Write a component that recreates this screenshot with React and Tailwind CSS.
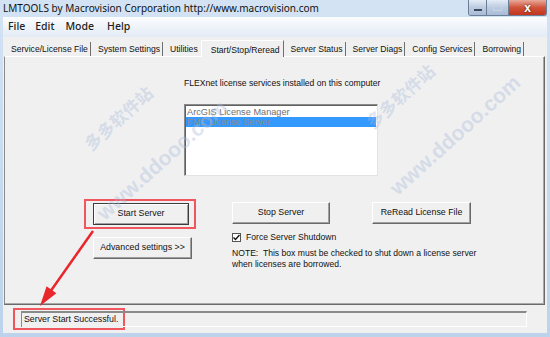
import React from "react"

const tabs = [
  "Service/License File",
  "System Settings",
  "Utilities",
  "Start/Stop/Reread",
  "Server Status",
  "Server Diags",
  "Config Services",
  "Borrowing",
]

function Btn({ children, className = "", isDefault = false }) {
  return (
    <div
      className={`h-[22px] flex items-center justify-center bg-[#f0f0f0] text-[8.8px] text-[#111] ${
        isDefault
          ? "border border-[#3c3c3c] shadow-[inset_1px_1px_0_#fff,inset_-1px_-1px_0_#a0a0a0]"
          : "border border-t-[#fff] border-l-[#fff] border-r-[#696969] border-b-[#696969] shadow-[inset_-1px_-1px_0_#a0a0a0]"
      } ${className}`}
    >
      {children}
    </div>
  )
}

function Watermark({ text, x, y, size, className = "" }) {
  return (
    <span
      className={`absolute -translate-x-1/2 -translate-y-1/2 rotate-[-42deg] whitespace-nowrap font-semibold text-[#a9bcdc]/40 pointer-events-none ${className}`}
      style={{ left: x, top: y, fontSize: size }}
    >
      {text}
    </span>
  )
}

export default function App() {
  return (
    <div className="w-[550px] h-[337px] relative overflow-hidden flex flex-col bg-[linear-gradient(to_bottom,#d3e3f4,#bcd3eb)] font-['Liberation_Sans',Arial,sans-serif] text-black">
      {/* title bar */}
      <div className="h-[17px] flex items-start justify-between">
        <span className="pl-[3px] pt-[2px] text-[10px] leading-[13px] text-[#111] font-['Noto_Sans','Open_Sans',sans-serif]">
          LMTOOLS by Macrovision Corporation http://www.macrovision.com
        </span>
        <div className="flex mr-[3px] rounded-b-[3px] overflow-hidden border border-t-0 border-[#6d7f98]">
          <div className="w-[18px] h-[15px] flex items-end justify-center pb-[4px] bg-[linear-gradient(to_bottom,#e4ecf6,#bccbe0_50%,#a9bcd6)] border-r border-[#6d7f98]">
            <span className="block w-[8px] h-[2px] bg-white border border-[#3b4a60]" />
          </div>
          <div className="w-[22px] h-[15px] flex items-center justify-center bg-[linear-gradient(to_bottom,#e4ecf6,#bccbe0_50%,#a9bcd6)] border-r border-[#6d7f98]">
            <span className="block w-[9px] h-[7px] border border-[#c9d4e4] border-t-2" />
          </div>
          <div className="w-[37px] h-[15px] flex items-center justify-center bg-[linear-gradient(to_bottom,#e9a99a,#d0533a_50%,#c2351e)]">
            <span className="text-white text-[12px] font-bold leading-none [text-shadow:0_0_2px_#4a1a10]">x</span>
          </div>
        </div>
      </div>

      {/* window body */}
      <div className="flex-1 mx-[3px] mb-[4px] flex flex-col bg-[#f0f0f0]">
        {/* menu */}
        <div className="h-[20px] flex items-center gap-[10px] pl-[5px] text-[10.5px] font-medium text-[#222] font-['Noto_Sans','Open_Sans',sans-serif] bg-[linear-gradient(to_bottom,#fbfcfe,#e3ebf5)]">
          <span>File</span>
          <span>Edit</span>
          <span className="ml-[1px]">Mode</span>
          <span className="ml-[3px]">Help</span>
        </div>

        {/* tabs */}
        <div className="h-[19px] flex items-end pl-[1px] text-[8.6px] text-[#111]">
          {tabs.map((t) =>
            t === "Start/Stop/Reread" ? (
              <div
                key={t}
                className="h-[17px] pl-[9px] pr-[3px] flex items-start pt-[3px] border-l border-t border-white border-r border-r-[#6f6f6f] bg-[#f0f0f0] -mb-[1px] relative z-10"
              >
                {t}
              </div>
            ) : (
              <div
                key={t}
                className={`h-[14px] pl-[7px] pr-[2px] flex items-center border-r ${
                  t === "Utilities" ? "border-transparent" : "border-[#6f6f6f]"
                }`}
              >
                {t}
              </div>
            )
          )}
        </div>

        {/* panel */}
        <div className="h-[249px] ml-[1px] mr-[2px] flex flex-col border border-t-white border-l-[#8c8c8c] border-r-[#6a6a6a] border-b-[#6a6a6a] shadow-[inset_-1px_-1px_0_#a9a9a9]">
          <div className="pl-[179px] pt-[21px] text-[8.6px] text-[#111]">
            <div className="leading-[11px]">FLEXnet license services installed on this computer</div>
            <div className="mt-[15px] w-[194px] h-[72px] bg-white border border-t-[#8a8a8a] border-l-[#8a8a8a] border-r-[#e3e3e3] border-b-[#e3e3e3] shadow-[inset_1px_1px_0_#606060] pt-[2px] pl-[1px] pr-[1px] text-[9.2px] leading-[10px]">
              <div className="pl-[1px] text-[#707070]">ArcGIS License Manager</div>
              <div className="pl-[1px] bg-[#3399ff] text-[#8a8a8a]">FME License Server</div>
            </div>
          </div>

          <div className="mt-[23px] flex">
            {/* left column */}
            <div className="ml-[79px] flex flex-col">
              <div className="w-[112px] pl-[7px] pr-[5px] pt-[2px] pb-[2px] border-2 border-[#f0565e]">
                <Btn isDefault>Start Server</Btn>
              </div>
              <Btn className="mt-[8px] w-[99px] ml-[9px]">Advanced settings &gt;&gt;</Btn>
            </div>

            {/* middle column */}
            <div className="ml-[36px] pt-[3px] w-[260px] flex flex-col text-[8.6px] text-[#111] whitespace-nowrap">
              <Btn className="w-[98px]">Stop Server</Btn>
              <div className="mt-[8px] flex items-center gap-[5px] leading-[11px]">
                <span className="w-[9px] h-[9px] bg-white border border-[#555] flex items-center justify-center">
                  <svg width="7" height="7" viewBox="0 0 7 7">
                    <path d="M0.5 3.5 L2.5 5.5 L6.5 1" fill="none" stroke="#111" strokeWidth="1.4" />
                  </svg>
                </span>
                <span>Force Server Shutdown</span>
              </div>
              <div className="mt-[5px] leading-[11px]">
                <div>NOTE:&nbsp; This box must be checked to shut down a license server</div>
                <div>when licenses are borrowed.</div>
              </div>
            </div>

            {/* right column */}
            <div className="-ml-[120px] pt-[3px]">
              <Btn className="w-[99px]">ReRead License File</Btn>
            </div>
          </div>
        </div>

        {/* status bar */}
        <div className="flex-1 pl-[10px] pr-[20px] pb-[1px] flex items-center">
          <div className="w-[112px] h-[22px] pl-[6px] flex items-center border-2 border-[#f0565e]">
            <div className="w-[104px] h-[16px] border-t-2 border-l border-[#8a8a8a] flex items-center pl-[2px] text-[8.8px] text-[#111]">
              Server Start Successful.
            </div>
          </div>
          <div className="-ml-[2px] flex-1 h-[16px] border-t-2 border-[#8a8a8a] border-r border-r-white border-b border-b-white self-center" />
        </div>
      </div>

      {/* watermark */}
      <Watermark text="多多软件站" x={118} y={118} size={17} className="font-['Noto_Sans_CJK_SC',sans-serif]" />
      <Watermark text="www.ddooo.com" x={162} y={160} size={21} />
      <Watermark text="多多软件站" x={400} y={96} size={17} className="font-['Noto_Sans_CJK_SC',sans-serif]" />
      <Watermark text="www.ddooo.com" x={455} y={135} size={21} />

      {/* red arrow */}
      <svg className="absolute inset-0 pointer-events-none" width="550" height="337" viewBox="0 0 550 337">
        <line x1="93" y1="231" x2="50" y2="292" stroke="#e8262b" strokeWidth="2.5" />
        <polygon points="40,306 46.6,286.2 56.4,293.2" fill="#e8262b" />
      </svg>
    </div>
  )
}
